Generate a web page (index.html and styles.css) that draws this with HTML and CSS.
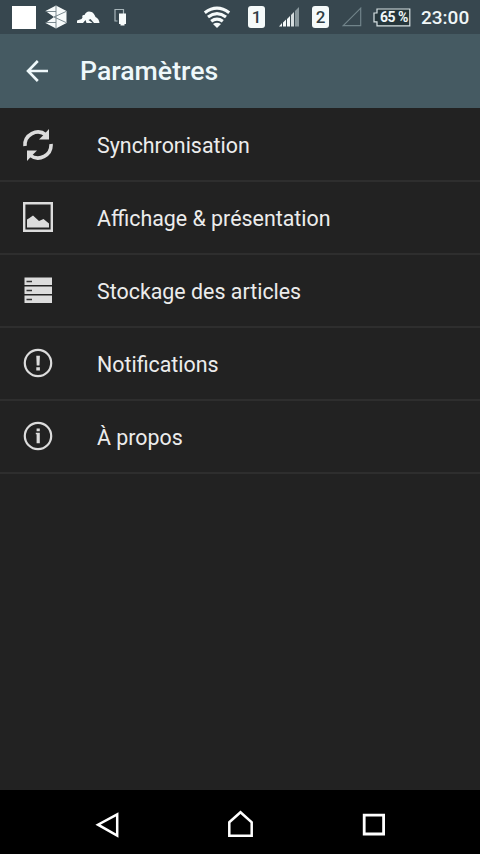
FILE: index.html
```html
<!DOCTYPE html>
<html lang="fr">
<head>
<meta charset="utf-8">
<title>Paramètres</title>
<link rel="stylesheet" href="styles.css">
</head>
<body>
<div class="screen">
  <div class="status">
    <div class="status-group notices">
      <span class="white-box"></span>
      <svg class="cube" width="22" height="24" viewBox="0 0 22 24"><path fill="#f7fbfb" d="M11 .5 21.500 6v12L11 23.500.5 18l8.500-6L.5 6z"/><path d="M11 .5v23M21 6.500 9 12l12 5.500M.5 6.500H11M.5 17.500H11" fill="none" stroke="#6d7e84" stroke-width=".9"/></svg>
      <svg class="figure" width="23" height="13" viewBox="0 0 23 13"><path fill="#f7fbfb" d="M0 9.500 4.500 8 5.500 6.500Q4.500 3.500 7.500 4 9 .5 12 .5c4 0 5.500 3 6.500 5.500Q22 7.500 22.500 12H17l-3.500-4-2 1 4 3H9.500L8.500 9 6 12H0z"/></svg>
      <svg class="usb" width="13" height="18" viewBox="0 0 13 18"><path d="M3.500 13H1V1.500h8.500V6" fill="none" stroke="#a7b5b9" stroke-width="1.200"/><path fill="#f7fbfb" d="M5 5.500h7V16h-1.500v1.500h-4V16H5z"/></svg>
    </div>
    <div class="status-group signals">
      <svg class="wifi" width="28" height="22" viewBox="0 0 28 22"><g fill="none" stroke="#f5fafa" stroke-width="3.200"><path d="M1.800 6.700Q14-2.300 26.200 6.700"/><path d="M5 11q9-6.600 18 0"/><path d="M8.200 15.200q5.800-4.200 11.600 0"/></g><path fill="#f5fafa" d="M10 18q4-2.600 8 0l-4 4z"/></svg>
      <span class="sim">1</span>
      <svg class="bars" width="20" height="20" viewBox="0 0 20 20"><path fill="#f5fafa" d="M0 19.500 3 16v3.500zM4 15.500l3-3v7H4zM8 12l3-3v10.500H8z"/><path fill="#d5dddf" d="m12 8 3-3v14.500h-3z"/><path fill="#89989d" d="m16 4 4-4v19.500h-4z"/></svg>
      <span class="sim">2</span>
      <svg class="empty" width="20" height="20" viewBox="0 0 20 20"><path d="M1.200 18.700 18.700 1.200v17.500z" fill="none" stroke="#71848a" stroke-width="1.200"/></svg>
      <span class="battery"><svg width="38" height="19" viewBox="0 0 38 19"><path d="M4 1h32.800v16.800H4v-4H1V5h3z" fill="#26363b" stroke="#d8e2e4" stroke-width="1.200"/></svg><span class="percent">65 %</span></span>
      <span class="clock">23:00</span>
    </div>
  </div>
  <header class="appbar">
    <svg width="24" height="24" viewBox="0 0 24 24"><path d="M11.800 2 2 12l9.800 10M2.500 12H22" fill="none" stroke="#eef8fa" stroke-width="2.600"/></svg>
    <h1>Paramètres</h1>
  </header>
  <main class="list">
    <div class="row">
      <svg width="32" height="34" viewBox="0 -1 32 34"><g fill="none" stroke="#dcdcdc" stroke-width="3.600"><path d="M3 18A13 13 0 0 1 24 6.800"/><path d="M29 16A13 13 0 0 1 8 27.200"/></g><path fill="#dcdcdc" d="M27 1v10.500H17l4-4zM5 33V22.500h10l-4 4z"/></svg>
      <span>Synchronisation</span>
    </div>
    <div class="row">
      <svg width="32" height="34" viewBox="0 0 32 34"><path d="M2.200 3.200h27.600v27.600H2.200z" fill="none" stroke="#dcdcdc" stroke-width="2.400"/><path fill="#dcdcdc" d="M5 27.500v-8l2.500-1.500 3.500-2.500 6 5.500 4.500-2 5.500 4.500v4z"/></svg>
      <span>Affichage &amp; présentation</span>
    </div>
    <div class="row">
      <svg width="32" height="34" viewBox="0 0 32 34"><path fill="#dcdcdc" d="M2.500 4.500H30V12H2.500zM2.500 13.500H30V21H2.500zM2.500 22.500H30V30H2.500z"/><path d="M4.500 8.500H10M4.500 17.500H10M4.500 26.500H10" stroke="#333" stroke-width="1.500"/></svg>
      <span>Stockage des articles</span>
    </div>
    <div class="row">
      <svg width="32" height="34" viewBox="0 0 32 34"><circle cx="16" cy="17" r="13.200" fill="none" stroke="#dcdcdc" stroke-width="2.200"/><path fill="#dcdcdc" d="M14.300 9.800h3.600l-.4 9.700h-2.800zM14.300 21.300h3.600v3.200h-3.600z"/></svg>
      <span>Notifications</span>
    </div>
    <div class="row">
      <svg width="32" height="34" viewBox="0 0 32 34"><circle cx="16" cy="17" r="13.200" fill="none" stroke="#dcdcdc" stroke-width="2.200"/><path fill="#dcdcdc" d="M14.600 9.500h3.200v2.800h-3.200zM13.800 13.800h4v10.500h-3.200v-9h-.8z"/></svg>
      <span>À propos</span>
    </div>
  </main>
  <nav class="nav">
    <svg width="28" height="30" viewBox="0 0 28 30"><path d="M24.200 4.300v21.400L5 14.700z" fill="none" stroke="#fff" stroke-width="2.500"/></svg>
    <svg width="28" height="30" viewBox="0 0 28 30"><path d="M2.300 12.200 13.500 2.200 24.700 12.200v13.600H2.300z" fill="none" stroke="#fff" stroke-width="2.500"/></svg>
    <svg width="28" height="30" viewBox="0 0 28 30"><path d="M4.200 5.200h19.400v18.800H4.200z" fill="none" stroke="#fff" stroke-width="2.800"/></svg>
  </nav>
</div>
</body>
</html>
```
FILE: styles.css
```css
* {
  box-sizing: border-box;
}

body {
  margin: 0;
  font-family: Roboto, "Liberation Sans", sans-serif;
  background: #222;
}

svg {
  display: block;
  flex: none;
}

.screen {
  display: flex;
  flex-direction: column;
  width: 480px;
  height: 854px;
  overflow: hidden;
}

.status {
  display: flex;
  justify-content: space-between;
  height: 34px;
  padding: 0 11px 0 12px;
  background: #37474f;
  color: #f0f7f8;
}

.status-group {
  display: flex;
  align-items: center;
}

.white-box {
  width: 24px;
  height: 23px;
  margin-right: 9px;
  background: #fff;
}

.cube {
  margin-right: 10px;
}

.figure {
  margin-right: 14px;
}

.wifi {
  margin-right: 17px;
}

.sim {
  width: 17px;
  height: 22px;
  border-radius: 3px;
  background: #f5fafa;
  color: #303d43;
  font-size: 17px;
  font-weight: 500;
  line-height: 22px;
  text-align: center;
}

.bars {
  margin: 0 13px 0 14px;
}

.empty {
  margin: 0 11px 0 13px;
}

.battery {
  display: grid;
  width: 38px;
  margin-right: 10px;
}

.battery > * {
  grid-area: 1 / 1;
}

.percent {
  padding-left: 4px;
  font-size: 14px;
  font-weight: 700;
  line-height: 19px;
  text-align: center;
  white-space: nowrap;
  letter-spacing: -0.5px;
}

.clock {
  width: 48px;
  font-size: 19px;
  font-weight: 500;
  line-height: 35px;
}

.appbar {
  display: flex;
  align-items: center;
  gap: 30px;
  height: 74px;
  padding-left: 26px;
  background: #455a62;
}

h1 {
  margin: 0;
  color: #eef8fa;
  font-size: 26.7px;
  font-weight: 500;
  line-height: 76px;
}

.list {
  flex: 1;
  padding-top: 1px;
  background: #222;
}

.row {
  display: flex;
  align-items: center;
  gap: 43px;
  height: 73px;
  padding: 0 0 1px 22px;
  border-bottom: 2px solid #2e2e2e;
  color: #ececec;
  font-size: 21.4px;
}

.row span {
  padding-top: 2px;
}

.nav {
  display: flex;
  align-items: center;
  justify-content: space-between;
  height: 64px;
  padding: 5px 92px 0 93px;
  background: #000;
}
```
